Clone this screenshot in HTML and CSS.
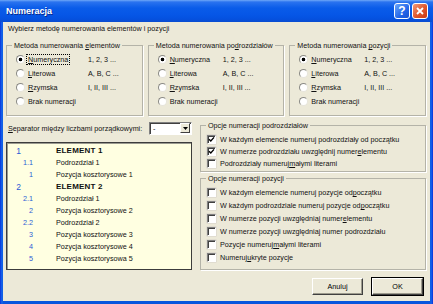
FILE: index.html
```html
<!DOCTYPE html>
<html lang="pl">
<head>
  <meta charset="UTF-8">
  <title>Numeracja</title>
  <link rel="stylesheet" href="styles.css">
</head>
<body>
  <div class="window">
    <div class="titlebar">
      <span class="title">Numeracja</span>
      <div class="title-buttons">
        <span class="tb-btn help">?</span>
        <span class="tb-btn close">
          <svg width="8" height="8" viewBox="0 0 8 8"><path d="M1 1L7 7M7 1L1 7" stroke="#fff" stroke-width="1.8"/></svg>
        </span>
      </div>
    </div>

    <div class="client">
      <p class="intro">Wybierz metodę numerowania elementów i pozycji</p>

      <!-- three numbering-method groups -->
      <div class="methods">
        <fieldset class="group">
          <legend>Metoda numerowania <u>e</u>lementów</legend>
          <div class="opts wide">
            <div class="opt"><span class="radio checked"></span><span class="opt-label"><span class="focus"><u>N</u>umeryczna</span></span><span class="sample">1, 2, 3 ...</span></div>
            <div class="opt"><span class="radio"></span><span class="opt-label"><u>L</u>iterowa</span><span class="sample">A, B, C ...</span></div>
            <div class="opt"><span class="radio"></span><span class="opt-label"><u>R</u>zymska</span><span class="sample">I, II, III ...</span></div>
            <div class="opt"><span class="radio"></span><span class="opt-label">Brak numeracji</span></div>
          </div>
        </fieldset>
        <fieldset class="group">
          <legend>Metoda numerowania po<u>d</u>rozdziałów</legend>
          <div class="opts">
            <div class="opt"><span class="radio checked"></span><span class="opt-label"><u>N</u>umeryczna</span><span class="sample">1, 2, 3 ...</span></div>
            <div class="opt"><span class="radio"></span><span class="opt-label"><u>L</u>iterowa</span><span class="sample">A, B, C ...</span></div>
            <div class="opt"><span class="radio"></span><span class="opt-label"><u>R</u>zymska</span><span class="sample">I, II, III ...</span></div>
            <div class="opt"><span class="radio"></span><span class="opt-label">Brak numeracji</span></div>
          </div>
        </fieldset>
        <fieldset class="group">
          <legend>Metoda numerowania <u>p</u>ozycji</legend>
          <div class="opts">
            <div class="opt"><span class="radio checked"></span><span class="opt-label"><u>N</u>umeryczna</span><span class="sample">1, 2, 3 ...</span></div>
            <div class="opt"><span class="radio"></span><span class="opt-label"><u>L</u>iterowa</span><span class="sample">A, B, C ...</span></div>
            <div class="opt"><span class="radio"></span><span class="opt-label"><u>R</u>zymska</span><span class="sample">I, II, III ...</span></div>
            <div class="opt"><span class="radio"></span><span class="opt-label">Brak numeracji</span></div>
          </div>
        </fieldset>
      </div>

      <div class="lower">
        <div class="left-col">
          <div class="sep-row">
            <span><u>S</u>eparator między liczbami porządkowymi:</span>
            <div class="combo">
              <span class="combo-value">-</span>
              <span class="combo-btn">
                <svg width="5" height="3" viewBox="0 0 5 3"><path d="M0 0H5L2.5 3Z" fill="#000"/></svg>
              </span>
            </div>
          </div>

          <!-- numbering preview -->
          <div class="preview">
            <div class="pv-row l1"><span class="pv-num">1</span><span class="pv-text">ELEMENT 1</span></div>
            <div class="pv-row l2"><span class="pv-num">1.1</span><span class="pv-text">Podrozdział 1</span></div>
            <div class="pv-row l3"><span class="pv-num">1</span><span class="pv-text">Pozycja kosztorysowe 1</span></div>
            <div class="pv-row l1"><span class="pv-num">2</span><span class="pv-text">ELEMENT 2</span></div>
            <div class="pv-row l2"><span class="pv-num">2.1</span><span class="pv-text">Podrozdział 1</span></div>
            <div class="pv-row l3"><span class="pv-num">2</span><span class="pv-text">Pozycja kosztorysowe 2</span></div>
            <div class="pv-row l2"><span class="pv-num">2.2</span><span class="pv-text">Podrozdział 2</span></div>
            <div class="pv-row l3"><span class="pv-num">3</span><span class="pv-text">Pozycja kosztorysowe 3</span></div>
            <div class="pv-row l3"><span class="pv-num">4</span><span class="pv-text">Pozycja kosztorysowe 4</span></div>
            <div class="pv-row l3"><span class="pv-num">5</span><span class="pv-text">Pozycja kosztorysowa 5</span></div>
          </div>
        </div>

        <div class="right-col">
          <fieldset class="group">
            <legend>Opcje numeracji podrozdziałów</legend>
            <div class="checks sub">
              <div class="check-row"><span class="check checked"><svg width="7" height="7" viewBox="0 0 7 7"><path d="M1 3.2L2.8 5L6 1.4" stroke="#000" stroke-width="1.4" fill="none"/></svg></span>W każdym elemencie numeruj podrozdziały od początku</div>
              <div class="check-row"><span class="check checked"><svg width="7" height="7" viewBox="0 0 7 7"><path d="M1 3.2L2.8 5L6 1.4" stroke="#000" stroke-width="1.4" fill="none"/></svg></span>W numerze podrozdziału uwzględnij numer <u>e</u>lementu</div>
              <div class="check-row"><span class="check"></span>Podrozdziały numeruj <u>m</u>ałymi literami</div>
            </div>
          </fieldset>

          <fieldset class="group">
            <legend>Opcje numeracji pozycji</legend>
            <div class="checks pos">
              <div class="check-row"><span class="check"></span>W każdym elemencie numeruj pozycje od <u>p</u>oczątku</div>
              <div class="check-row"><span class="check"></span>W każdym podrozdziale numeruj pozycje od <u>p</u>oczątku</div>
              <div class="check-row"><span class="check"></span>W numerze pozycji uwzględniaj numer <u>e</u>lementu</div>
              <div class="check-row"><span class="check"></span>W numerze pozycji uwzględniaj numer podrozdziału</div>
              <div class="check-row"><span class="check"></span>Pozycje numeruj <u>m</u>ałymi literami</div>
              <div class="check-row"><span class="check"></span>Numeruj <u>u</u>kryte pozycje</div>
            </div>
          </fieldset>
        </div>
      </div>

      <div class="buttons">
        <button class="btn">Anuluj</button>
        <button class="btn default">OK</button>
      </div>
    </div>
  </div>
</body>
</html>
```

FILE: styles.css
```css
* {
  box-sizing: border-box;
}

html, body {
  margin: 0;
  padding: 0;
}

body {
  width: 433px;
  height: 304px;
  overflow: hidden;
  font-family: 'Liberation Sans', Arial, sans-serif;
  font-size: 7.2px;
  color: #111;
}

.window {
  width: 433px;
  height: 304px;
  display: flex;
  flex-direction: column;
  background: linear-gradient(to right, #0831d9 0, #166aee 2px, #0855dd 3px, #0855dd calc(100% - 3px), #166aee calc(100% - 2px), #0831d9 100%);
}

/* title bar */
.titlebar {
  height: 22px;
  flex: none;
  display: flex;
  align-items: center;
  justify-content: space-between;
  padding: 0 5px 0 6px;
  background: linear-gradient(to bottom, #6fa8f8 0, #2a73ef 2px, #0a5ce9 8px, #0656e6 15px, #0551df 19px, #0a4cd0 22px);
}

.title {
  color: #fff;
  font-weight: bold;
  font-size: 9px;
  text-shadow: 1px 1px 0 #0b2a8c;
}

.title-buttons {
  display: flex;
  gap: 2px;
}

.tb-btn {
  width: 16px;
  height: 16px;
  border: 1px solid #fff;
  border-radius: 3px;
  display: flex;
  align-items: center;
  justify-content: center;
  color: #fff;
  font-weight: bold;
  font-size: 12px;
}

.help {
  background: linear-gradient(135deg, #6aa6fb, #2466e8 60%, #1a52d2);
}

.close {
  background: linear-gradient(135deg, #f09a7a, #e0562c 55%, #c83a14);
}

/* dialog body */
.client {
  flex: 1;
  margin: 0 3px 3px;
  padding: 2px 4px 0 3px;
  background: #ece9d8;
  display: flex;
  flex-direction: column;
}

.intro {
  margin: 0;
  padding-left: 2px;
  line-height: 10px;
}

u {
  text-decoration-thickness: 1px;
  text-underline-offset: 1px;
}

.group {
  margin: 0;
  padding: 0;
  min-width: 0;
  border: 1px solid #b4b3a8;
  box-shadow: 1px 1px 0 #fff;
}

.group legend {
  margin-left: 5px;
  padding: 0 2px;
  line-height: 9px;
}

.methods {
  margin-top: 7px;
  display: grid;
  grid-template-columns: repeat(3, 1fr);
  gap: 5px;
}

.opts {
  padding: 2px 0 7px 9px;
}

.opt {
  height: 14px;
  display: flex;
  align-items: center;
}

.radio {
  width: 9px;
  height: 9px;
  flex: none;
  margin-right: 3px;
  border-radius: 50%;
  border: 1px solid;
  border-color: #8a8a84 #e6e4da #e6e4da #8a8a84;
  background: #fff;
}

.radio.checked {
  background: radial-gradient(circle, #000 0, #000 1.6px, #fff 2.1px);
}

.opt-label {
  width: 53px;
  flex: none;
}

.opts.wide .opt-label {
  width: 60px;
}

.sample {
  color: #111;
}

.focus {
  outline: 1px dotted #000;
  padding: 0 1px;
  margin-left: -1px;
}

/* lower part: separator, preview and options */
.lower {
  margin-top: 5px;
  display: grid;
  grid-template-columns: 186px 1fr;
  column-gap: 8px;
}

.sep-row {
  height: 14px;
  display: flex;
  align-items: center;
  justify-content: space-between;
  padding-left: 2px;
}

.combo {
  width: 43px;
  height: 13px;
  display: flex;
  align-items: center;
  background: #fff;
  border: 1px solid;
  border-color: #808080 #fff #fff #808080;
  box-shadow: inset 1px 1px 0 #404040;
}

.combo-value {
  flex: 1;
  padding-left: 3px;
}

.combo-btn {
  width: 10px;
  height: 10px;
  margin-right: 1px;
  display: flex;
  align-items: center;
  justify-content: center;
  background: #ece9d8;
  border: 1px solid;
  border-color: #fff #404040 #404040 #fff;
}

.preview {
  margin-top: 7px;
  height: 128px;
  padding: 2px 0 0;
  background: #ffffe1;
  border: 1px solid #3c3c3c;
  box-shadow: inset 1px 1px 0 #9a9a90;
}

.pv-row {
  height: 12px;
  line-height: 12px;
  display: flex;
  align-items: center;
}

.pv-num {
  width: 27px;
  flex: none;
  text-align: right;
  padding-right: 1px;
  color: #2a5cd6;
}

.pv-row.l1 .pv-num {
  padding-right: 13px;
  font-size: 8.5px;
}

.pv-text {
  margin-left: 22px;
}

.pv-row.l1 .pv-text {
  font-weight: bold;
  font-size: 8px;
  letter-spacing: 0.2px;
}

.right-col {
  display: flex;
  flex-direction: column;
  gap: 2px;
}

.checks {
  padding: 3px 0 2px 6px;
}

.checks.pos {
  padding-bottom: 5px;
}

.check-row {
  height: 12px;
  display: flex;
  align-items: center;
}

.checks.pos .check-row {
  height: 13px;
}

.check {
  width: 9px;
  height: 9px;
  flex: none;
  margin-right: 4px;
  display: flex;
  align-items: center;
  justify-content: center;
  background: #fff;
  border: 1px solid;
  border-color: #808080 #fff #fff #808080;
  box-shadow: inset 1px 1px 0 #404040, 0 0 0 0.5px #d4d0c8;
}

/* bottom buttons */
.buttons {
  margin-top: 8px;
  padding-right: 3px;
  display: flex;
  justify-content: flex-end;
  gap: 9px;
}

.btn {
  width: 51px;
  height: 17px;
  padding: 0;
  font: inherit;
  color: #000;
  background: #ece9d8;
  border: 1px solid;
  border-color: #fff #404040 #404040 #fff;
  box-shadow: inset -1px -1px 0 #9d9b8e;
}

.btn.default {
  outline: 1px solid #000;
}
```
